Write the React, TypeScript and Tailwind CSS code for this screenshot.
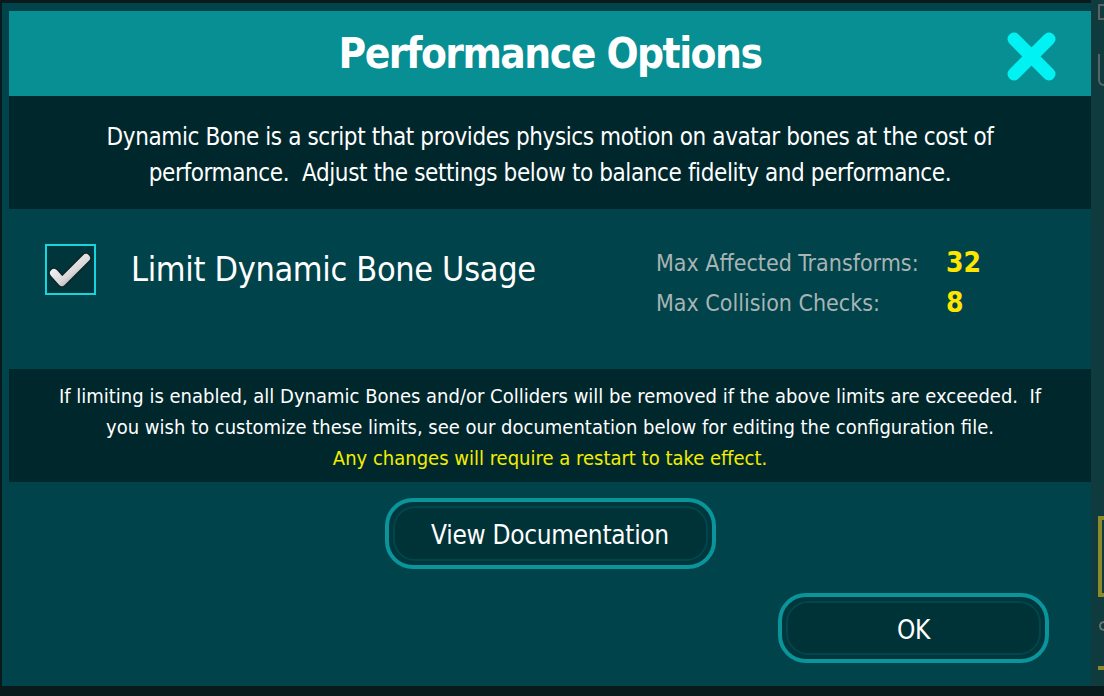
import React from 'react';

const font = { fontFamily: '"Liberation Sans Narrow", "DejaVu Sans Condensed", "Roboto", sans-serif' };

const CloseIcon = () => (
    <svg width="49" height="49" viewBox="0 0 49 49">
        <path d="M7 7 L42 42 M42 7 L7 42" stroke="#00f2f2" strokeWidth="13" strokeLinecap="round" />
    </svg>
);

const CheckBox = () => (
    <div className="w-[51px] h-[51px] border-2 border-[#18d4dc] bg-[#00363b] shrink-0">
        <svg width="47" height="47" viewBox="0 0 47 47">
            <defs>
                <linearGradient id="chk" x1="0" y1="0" x2="1" y2="1">
                    <stop offset="0" stopColor="#ffffff" />
                    <stop offset="0.6" stopColor="#d8d8d8" />
                    <stop offset="1" stopColor="#8c8c8c" />
                </linearGradient>
            </defs>
            <path d="M7 27 L15 36 L39 12" fill="none" stroke="#1a1a1a" strokeWidth="11" strokeLinecap="round" strokeLinejoin="round" opacity="0.6" />
            <path d="M7 27 L15 36 L39 12" fill="none" stroke="url(#chk)" strokeWidth="8" strokeLinecap="round" strokeLinejoin="round" />
        </svg>
    </div>
);

const GameButton = ({ label, className }: { label: string; className: string }) => (
    <button className={`rounded-[28px] border-4 border-[#0a959b] bg-[#00363c] p-[4px] ${className}`}>
        <div className="h-full w-full rounded-[22px] border-2 border-[#00464c] bg-[#003338] flex items-center justify-center pt-[4px] text-white text-[26px] tracking-[-0.3px]">
            {label}
        </div>
    </button>
);

export default function App() {
    return (
        <div className="w-[1104px] h-[696px] bg-[#081a1c] flex overflow-hidden" style={font}>
            {/* Dialog */}
            <div className="w-[1089px] h-[683px] ml-[2px] mt-[3px] bg-[#00434a] pl-[7px] pt-[8px] flex flex-col">
                {/* Header */}
                <div className="h-[85px] bg-[#078f94] relative flex items-center justify-center">
                    <h1 className="text-white text-[42px] font-bold leading-none tracking-[-1.5px]">Performance Options</h1>
                    <div className="absolute right-[35px] top-[21px]">
                        <CloseIcon />
                    </div>
                </div>

                {/* Description */}
                <div className="h-[113px] bg-[#00282c] flex flex-col items-center justify-center pt-[5px] text-white text-[24px] leading-[36px] tracking-[-0.4px] text-center">
                    <p>Dynamic Bone is a script that provides physics motion on avatar bones at the cost of</p>
                    <p className="whitespace-pre">performance.  Adjust the settings below to balance fidelity and performance.</p>
                </div>

                {/* Options row */}
                <div className="h-[160px] flex items-start pt-[35px] pl-[36px]">
                    <CheckBox />
                    <span className="ml-[35px] text-white text-[34px] leading-[51px] tracking-[-0.35px]">Limit Dynamic Bone Usage</span>
                    <div className="ml-auto mr-[110px] -mt-[1px] grid grid-cols-[290px_auto] text-[23px] leading-[40px]">
                        <span className="text-[#a8b4b5]">Max Affected Transforms:</span>
                        <span className="text-[#ffe600] font-bold text-[28px]">32</span>
                        <span className="text-[#a8b4b5]">Max Collision Checks:</span>
                        <span className="text-[#ffe600] font-bold text-[28px]">8</span>
                    </div>
                </div>

                {/* Info */}
                <div className="h-[113px] bg-[#00282c] flex flex-col items-center justify-center pt-[4px] text-[20px] leading-[31px] text-center">
                    <p className="text-white whitespace-pre">If limiting is enabled, all Dynamic Bones and/or Colliders will be removed if the above limits are exceeded.  If</p>
                    <p className="text-white">you wish to customize these limits, see our documentation below for editing the configuration file.</p>
                    <p className="text-[#f2ee00]">Any changes will require a restart to take effect.</p>
                </div>

                <div className="flex justify-center mt-[16px]">
                    <GameButton label="View Documentation" className="w-[331px] h-[71px]" />
                </div>

                <div className="flex justify-end mt-[24px] pr-[42px]">
                    <GameButton label="OK" className="w-[271px] h-[70px]" />
                </div>
            </div>

            {/* Scene behind the dialog */}
            <div className="flex-1 h-[686px] bg-[#0f3a3e] flex flex-col items-end">
                <div className="mt-[4px] w-[6px] h-[16px] border-y-2 border-l-2 border-[#5a6464]" />
                <div className="mt-[34px] w-[6px] h-[32px] rounded-bl-[6px] border-l-2 border-b-2 border-[#5a6464]" />
                <div className="mt-[430px] w-[6px] h-[81px] border-y-4 border-l-4 border-[#8d8a2a]" />
                <div className="mt-[24px] w-[5px] h-[10px] rounded-l-full border-2 border-r-0 border-[#6b7272]" />
                <div className="mt-[35px] w-[6px] h-[4px] bg-[#8d8a2a]" />
            </div>
        </div>
    );
}
